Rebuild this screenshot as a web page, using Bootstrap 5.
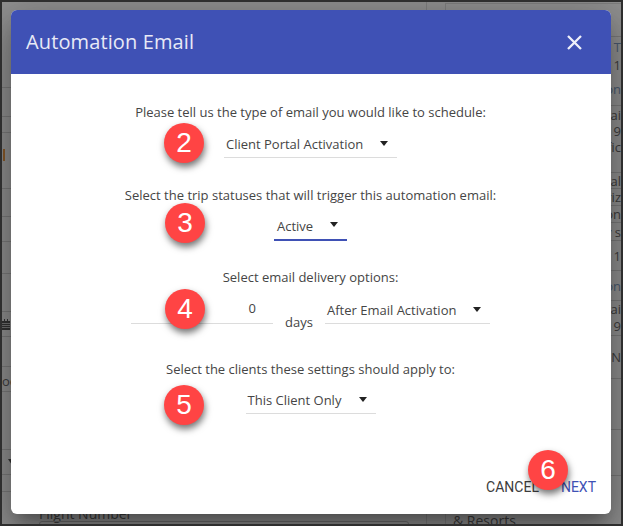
<!DOCTYPE html>
<html lang="en">
<head>
<meta charset="utf-8">
<title>Automation Email</title>
<link href="https://cdn.jsdelivr.net/npm/bootstrap@5.3.0/dist/css/bootstrap.min.css" rel="stylesheet">
<style>
html,body{margin:0;height:526px;overflow:hidden;background:#8d8d8d}
body{font-family:"Open Sans",sans-serif;font-size:13px;color:#212121}
.scene{position:relative;width:623px;height:526px;overflow:hidden;background:#919191;border:2px solid #2e2e2e;box-sizing:border-box}
.under{height:100%;width:100%;color:#3e3e3e;font-size:13px;line-height:14px}
.under-left{width:36px;flex:none}
.under-mid{flex:1 1 auto;min-width:0;border-right:1px solid #7f7f7f}
.under-gap{width:18px;flex:none}
.under-right{width:176px;flex:none;border-left:1px solid #7f7f7f;border-top:1px solid #7f7f7f;margin-top:1px}
.strip-row{border-bottom:1px solid #7b7b7b;white-space:nowrap;overflow:hidden;display:flex;align-items:center}
.under-left .strip-row:nth-child(1){height:86px}
.under-left .strip-row:nth-child(2){height:29px}
.under-left .strip-row:nth-child(3){height:16px}
.under-left .strip-row:nth-child(4){height:56px;padding-bottom:12px}
.under-left .strip-row:nth-child(5){height:28px}
.under-left .strip-row:nth-child(6){height:25px}
.under-left .strip-row:nth-child(7){height:32px}
.under-left .strip-row:nth-child(8){height:38px}
.under-left .strip-row:nth-child(9){height:25px}
.under-left .strip-row:nth-child(10){height:30px}
.under-left .strip-row:nth-child(11){height:25px;padding-top:3px}
.under-left .strip-row:nth-child(12){height:58px}
.under-left .strip-row:nth-child(13){height:25px}
.under-left .strip-row:nth-child(14){height:17px}
.bar-orange{width:2px;height:12px;background:#8a5a2a;margin-left:1px}
.dot-purple{width:3px;height:3px;background:#5a5a8a;margin-left:6px;border-radius:50%}
.caret-under{width:0;height:0;border-left:4px solid transparent;border-right:4px solid transparent;border-top:6px solid #333;margin-left:6px}
.under-right .strip-row{justify-content:flex-end;border-bottom-color:transparent}
.under-right .strip-row.ruled{border-bottom-color:#7b7b7b}
.tint{color:#4a5a70}
.under-right .strip-row:nth-child(1){height:33px}
.under-right .strip-row:nth-child(2){height:20px}
.under-right .strip-row:nth-child(3){height:16px}
.under-right .strip-row:nth-child(4){height:33px}
.under-right .strip-row:nth-child(5){height:18px}
.under-right .strip-row:nth-child(6){height:14px}
.under-right .strip-row:nth-child(7){height:18px}
.under-right .strip-row:nth-child(8){height:17px}
.under-right .strip-row:nth-child(9){height:16px}
.under-right .strip-row:nth-child(10){height:17px}
.under-right .strip-row:nth-child(11){height:17px}
.under-right .strip-row:nth-child(12){height:18px}
.under-right .strip-row:nth-child(13){height:30px}
.under-right .strip-row:nth-child(14){height:30px}
.under-right .strip-row:nth-child(15){height:16px}
.under-right .strip-row:nth-child(16){height:19px}
.under-right .strip-row:nth-child(17){height:43px}
.under-right .strip-row:nth-child(18){height:51px}
.under-right .strip-row:nth-child(19){height:46px}
.dlg{position:absolute;left:9px;top:8px;width:600px;height:504px;border:0;background:#fff;border-radius:6px;overflow:visible;box-shadow:0 11px 15px -7px rgba(0,0,0,.3),0 24px 38px 3px rgba(0,0,0,.16),0 9px 46px 8px rgba(0,0,0,.2)}
.dlg .modal-header{background:#3f51b5;color:#fff;height:64px;padding:0 29px 0 15px;border:0;border-radius:6px 6px 0 0}
.dlg .modal-title{font-size:20px;line-height:1;font-weight:400;color:#e8eaf6;letter-spacing:.12px}
.x-btn{background:none;border:0;padding:0;line-height:0}
.dlg .modal-body{padding:29px 1px 0 0;flex:1 1 auto;color:#454545}
.prompt{line-height:18px;margin:0}
.ctl-row{margin-top:10px;height:27px;align-items:flex-start}
.ctl-low{margin-top:11px}
.ctl-tight{margin-top:9px}
.gap-a{margin-top:28px}
.gap-a2{margin-top:27px}
.gap-b{margin-top:36px}
.sel{height:27px;border-bottom:1px solid #dcdcdc;padding:0 9px 0 2px;line-height:26px;text-align:left}
.sel-1{width:173px}
.sel-2{width:73px;border-bottom:2px solid #3f51b5;padding:0 9px 2px 3px}
.sel-3{width:165px}
.sel-4{width:130px}
.tri{width:0;height:0;border-left:4.5px solid transparent;border-right:4.5px solid transparent;border-top:5px solid #222;margin-top:-2px;flex:none}
.num{width:142px;height:27px;border-bottom:1px solid #dcdcdc;text-align:right;padding-right:17px;line-height:22px}
.unit{width:27px;margin:0 13px 0 12px;line-height:24px;padding-top:13px;white-space:nowrap}
.dlg .modal-footer{border:0;padding:0 15px 18px 0;gap:22px;flex-wrap:nowrap}
.act{background:none;border:0;padding:0;margin:0;font-family:Roboto,sans-serif;font-size:14px;line-height:18px}
.act-cancel{color:#3c3c3c}
.act-next{color:#3f51b5}
.pin{position:absolute;width:40px;height:40px;border-radius:50%;background:#ff4444;color:#fff;font-family:"Liberation Sans",sans-serif;font-size:28px;line-height:40px;text-align:center;box-shadow:1px 4px 7px rgba(0,0,0,.55)}
.pin-2{left:162px;top:121px}
.pin-3{left:163px;top:201px}
.pin-4{left:163px;top:287px}
.pin-5{left:162px;top:383px}
.pin-6{left:526px;top:448px}
.peek{position:absolute;color:#3e3e3e;font-size:14px;line-height:18px;white-space:nowrap}
.peek-flight{left:37px;top:503px}
.peek-resorts{left:451px;top:510px}
.peek-box{position:absolute;left:37px;top:519px;width:370px;height:12px;border:1px solid #6f6f6f;border-radius:3px}
</style>
</head>
<body>
<div class="scene">
  <div class="under d-flex">
    <div class="under-left">
      <div class="strip-row"></div>
      <div class="strip-row"></div>
      <div class="strip-row"></div>
      <div class="strip-row"><i class="bar-orange"></i><i class="dot-purple"></i></div>
      <div class="strip-row"></div>
      <div class="strip-row"></div>
      <div class="strip-row"></div>
      <div class="strip-row"></div>
      <div class="strip-row"><svg width="8" height="11" viewBox="0 0 8 11" aria-hidden="true"><path fill="#333" d="M0 2h8v9H0zM2 0h1v2H2zM5 0h1v2H5z"/><path stroke="#8f8f8f" stroke-width=".7" d="M0 4.5h8M0 6.5h8M0 8.5h8"/></svg></div>
      <div class="strip-row"></div>
      <div class="strip-row">oc</div>
      <div class="strip-row"></div>
      <div class="strip-row"><i class="caret-under"></i></div>
      <div class="strip-row"></div>
    </div>
    <div class="under-mid"></div>
    <div class="under-gap"></div>
    <div class="under-right">
      <div class="strip-row ruled"></div>
      <div class="strip-row tint">4 T</div>
      <div class="strip-row">7 1</div>
      <div class="strip-row tint ruled">on</div>
      <div class="strip-row">nai</div>
      <div class="strip-row">319</div>
      <div class="strip-row">fic</div>
      <div class="strip-row ruled"></div>
      <div class="strip-row ruled">nal</div>
      <div class="strip-row ruled">riz</div>
      <div class="strip-row ruled">on</div>
      <div class="strip-row ruled">y s</div>
      <div class="strip-row ruled">f 1</div>
      <div class="strip-row tint ruled">on</div>
      <div class="strip-row">nai</div>
      <div class="strip-row ruled">319</div>
      <div class="strip-row ruled">N</div>
      <div class="strip-row ruled"></div>
      <div class="strip-row ruled"></div>
    </div>
  </div>
  <div class="peek peek-flight">Flight Number</div>
  <div class="peek peek-resorts">&amp; Resorts</div>
  <div class="peek-box"></div>

  <div class="modal-content dlg">
    <div class="modal-header d-flex justify-content-between align-items-center">
      <h5 class="modal-title">Automation Email</h5>
      <button type="button" class="x-btn" aria-label="Close">
        <svg width="15" height="15" viewBox="0 0 15 15" aria-hidden="true"><path d="M1 1l13 13M14 1L1 14" stroke="#eef0fa" stroke-width="2.3" fill="none"/></svg>
      </button>
    </div>
    <div class="modal-body text-center">
      <p class="prompt">Please tell us the type of email you would like to schedule:</p>
      <div class="d-flex justify-content-center ctl-row">
        <div class="sel sel-1 d-flex justify-content-between align-items-center"><span>Client Portal Activation</span><i class="tri"></i></div>
      </div>
      <p class="prompt gap-a">Select the trip statuses that will trigger this automation email:</p>
      <div class="d-flex justify-content-center ctl-row">
        <div class="sel sel-2 d-flex justify-content-between align-items-center"><span>Active</span><i class="tri"></i></div>
      </div>
      <p class="prompt gap-a2">Select email delivery options:</p>
      <div class="d-flex justify-content-center ctl-row ctl-low">
        <div class="num">0</div>
        <div class="unit">days</div>
        <div class="sel sel-3 d-flex justify-content-between align-items-center"><span>After Email Activation</span><i class="tri"></i></div>
      </div>
      <p class="prompt gap-b">Select the clients these settings should apply to:</p>
      <div class="d-flex justify-content-center ctl-row ctl-tight">
        <div class="sel sel-4 d-flex justify-content-between align-items-center"><span>This Client Only</span><i class="tri"></i></div>
      </div>
    </div>
    <div class="modal-footer d-flex justify-content-end">
      <button type="button" class="act act-cancel">CANCEL</button>
      <button type="button" class="act act-next">NEXT</button>
    </div>
  </div>

  <div class="pin pin-2">2</div>
  <div class="pin pin-3">3</div>
  <div class="pin pin-4">4</div>
  <div class="pin pin-5">5</div>
  <div class="pin pin-6">6</div>
</div>
<script src="https://cdn.jsdelivr.net/npm/bootstrap@5.3.0/dist/js/bootstrap.bundle.min.js"></script>
</body>
</html>
